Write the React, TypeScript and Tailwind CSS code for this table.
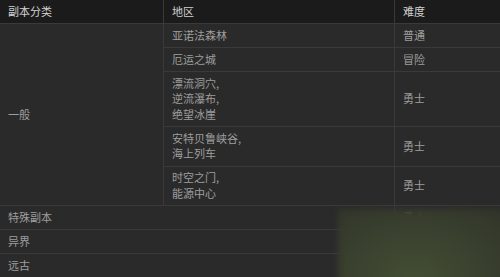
import React from 'react';

type Row = { area: string[]; level: string };

const NORMAL_ROWS: Row[] = [
    { area: ['亚诺法森林'], level: '普通' },
    { area: ['厄运之城'], level: '冒险' },
    { area: ['漂流洞穴,', '逆流瀑布,', '绝望冰崖'], level: '勇士' },
    { area: ['安特贝鲁峡谷,', '海上列车'], level: '勇士' },
    { area: ['时空之门,', '能源中心'], level: '勇士' },
];

const OTHER_ROWS = [
    { name: '特殊副本', level: '勇士' },
    { name: '异界', level: '' },
    { name: '远古', level: '' },
];

const cell = 'border border-[#3a3a3a] px-2 py-[3.75px] align-middle text-left font-normal';

export default function App() {
    return (
        <div
            className="relative w-[500px] h-[277px] overflow-hidden bg-[#2a2a2a] text-[11px] leading-[15.5px] text-[#9e9e9e]"
            style={{ fontFamily: '"Noto Sans CJK SC", "Noto Sans", sans-serif' }}
        >
            <table className="w-[502px] -ml-px -mt-px table-fixed border-collapse">
                <colgroup>
                    <col className="w-[164px]" />
                    <col className="w-[231px]" />
                    <col className="w-[107px]" />
                </colgroup>
                <thead>
                    <tr className="bg-[#1b1b1b] text-[#d2d2d2]">
                        <th className={`${cell} h-[23px]`}>副本分类</th>
                        <th className={`${cell} h-[23px]`}>地区</th>
                        <th className={`${cell} h-[23px]`}>难度</th>
                    </tr>
                </thead>
                <tbody>
                    {NORMAL_ROWS.map((row, i) => (
                        <tr key={i}>
                            {i === 0 && (
                                <td rowSpan={NORMAL_ROWS.length} className={cell}>
                                    一般
                                </td>
                            )}
                            <td className={cell}>
                                {row.area.map((line) => (
                                    <div key={line}>{line}</div>
                                ))}
                            </td>
                            <td className={cell}>{row.level}</td>
                        </tr>
                    ))}
                    {OTHER_ROWS.map((row) => (
                        <tr key={row.name}>
                            <td colSpan={2} className={cell}>
                                {row.name}
                            </td>
                            <td className={cell}>{row.level}</td>
                        </tr>
                    ))}
                </tbody>
            </table>

            {/* greenish blurred patch sitting over the lower right corner */}
            <div className="absolute left-[338px] top-[209px] -right-2 -bottom-2 bg-[radial-gradient(ellipse_at_45%_90%,#434d34_0%,#3b422f_45%,#30342a_100%)] blur-[3px]" />
        </div>
    );
}
